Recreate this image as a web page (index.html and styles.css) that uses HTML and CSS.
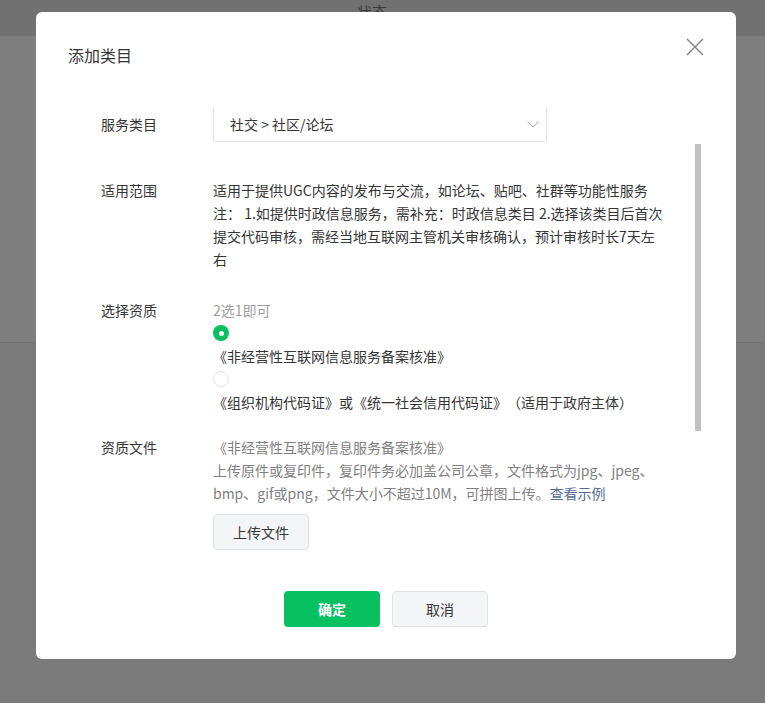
FILE: index.html
```html
<!DOCTYPE html>
<html lang="zh-CN">
<head>
<meta charset="utf-8">
<title>添加类目</title>
<link rel="stylesheet" href="styles.css">
</head>
<body>
<div class="page">
  <div class="thead"><span class="th-gap"></span><span class="th">状态</span></div>
  <div class="tbody"></div>
  <div class="rest"></div>
</div>

<div class="dialog">
  <div class="dialog-hd">
    <h3 class="dialog-title">添加类目</h3>
    <button class="close" type="button" aria-label="关闭">
      <svg width="18" height="18" viewBox="0 0 18 18"><path d="M1 1L17 17M17 1L1 17" stroke="#808080" stroke-width="1.4" fill="none"/></svg>
    </button>
  </div>
  <div class="dialog-bd">
    <div class="form">
      <div class="row row-select">
        <div class="lbl lbl-tall">服务类目</div>
        <div class="ctrl">
          <div class="select">
            <span>社交 &gt; 社区/论坛</span>
            <svg class="chev" width="12" height="7" viewBox="0 0 12 7"><path d="M0.5 0.8L6 6L11.5 0.8" stroke="#a6a6a6" stroke-width="1" fill="none"/></svg>
          </div>
        </div>
      </div>

      <div class="row row-scope">
        <div class="lbl">适用范围</div>
        <div class="ctrl text-main">
          <p class="para">适用于提供UGC内容的发布与交流，如论坛、贴吧、社群等功能性服务</p>
          <p class="para">注： 1.如提供时政信息服务，需补充：时政信息类目 2.选择该类目后首次提交代码审核，需经当地互联网主管机关审核确认，预计审核时长7天左右</p>
        </div>
      </div>

      <div class="row row-qual">
        <div class="lbl">选择资质</div>
        <div class="ctrl">
          <div class="tip">2选1即可</div>
          <div class="radio-line"><span class="radio checked"></span></div>
          <div class="opt">《非经营性互联网信息服务备案核准》</div>
          <div class="radio-line"><span class="radio"></span></div>
          <div class="opt">《组织机构代码证》或《统一社会信用代码证》（适用于政府主体）</div>
        </div>
      </div>

      <div class="row row-file">
        <div class="lbl">资质文件</div>
        <div class="ctrl">
          <div class="desc">《非经营性互联网信息服务备案核准》</div>
          <div class="desc">上传原件或复印件，复印件务必加盖公司公章，文件格式为jpg、jpeg、bmp、gif或png，文件大小不超过10M，可拼图上传。<a class="link" href="#">查看示例</a></div>
          <button class="btn btn-default btn-upload" type="button">上传文件</button>
        </div>
      </div>
    </div>
    <div class="thumb"></div>
  </div>
  <div class="dialog-ft">
    <button class="btn btn-primary" type="button">确定</button>
    <button class="btn btn-default" type="button">取消</button>
  </div>
</div>
</body>
</html>
```

FILE: styles.css
```css
html, body {
  margin: 0;
  padding: 0;
}
body {
  width: 765px;
  height: 703px;
  overflow: hidden;
  background: #7a7a7a;
  font-family: "Noto Sans CJK SC", "Microsoft YaHei", sans-serif;
  font-size: 14px;
  color: #353535;
  text-spacing-trim: space-all;
  position: relative;
}

/* background page (under the mask) */
.page {
  display: flex;
  flex-direction: column;
}
.thead {
  height: 36px;
  background: #717171;
  display: grid;
  grid-template-columns: 322px 100px 1fr;
  color: #3a3a3a;
  font-size: 15px;
  line-height: 18px;
}
.th {
  text-align: center;
  padding-top: 3px;
}
.tbody {
  height: 306px;
  background: #7f7f7f;
  border-bottom: 1px solid #727272;
}
.rest {
  flex: 1;
}

/* dialog */
.dialog {
  position: absolute;
  left: 36px;
  top: 12px;
  width: 700px;
  height: 647px;
  background: #fff;
  border-radius: 6px;
  display: flex;
  flex-direction: column;
  box-sizing: border-box;
}
.dialog-hd {
  position: relative;
  padding: 32px 32px 0;
}
.dialog-title {
  margin: 0;
  font-size: 16px;
  font-weight: normal;
  line-height: 22px;
  color: #353535;
}
.close {
  position: absolute;
  top: 26px;
  right: 32px;
  width: 18px;
  height: 18px;
  padding: 0;
  border: 0;
  background: none;
  display: block;
}
.close svg {
  display: block;
}

.dialog-bd {
  position: relative;
  margin: 42px 32px 0;
  height: 463px;
  overflow: hidden;
}
.form {
  margin-top: -2px;
  padding-left: 33px;
}
.row {
  display: flex;
  align-items: flex-start;
}
.lbl {
  width: 112px;
  flex: none;
  line-height: 23px;
  color: #353535;
}
.lbl-tall {
  line-height: 36px;
}
.ctrl {
  width: 454px;
  line-height: 23px;
}
.row-scope { margin-top: 36.5px; }
.row-qual { margin-top: 28px; }
.row-file { margin-top: 22px; }

.select {
  width: 334px;
  height: 36px;
  box-sizing: border-box;
  border: 1px solid #e4e4e4;
  border-radius: 2px;
  padding: 0 7px 0 16px;
  display: flex;
  align-items: center;
  justify-content: space-between;
  color: #353535;
}
.chev {
  display: block;
}

.para {
  margin: 0;
}
.text-main {
  color: #353535;
}

.tip {
  color: #9e9e9e;
}
.radio-line {
  height: 23px;
  display: flex;
  align-items: center;
}
.radio {
  width: 16px;
  height: 16px;
  box-sizing: border-box;
  border-radius: 50%;
  border: 1px solid #e3e3e3;
  background: #fff;
  display: flex;
  align-items: center;
  justify-content: center;
}
.radio.checked {
  border: 0;
  background: #07c160;
}
.radio.checked::after {
  content: "";
  width: 5px;
  height: 5px;
  border-radius: 50%;
  background: #fff;
}
.opt {
  color: #353535;
}

.desc {
  color: #7f7f7f;
}
.link {
  color: #576b95;
  text-decoration: none;
}

.btn {
  width: 96px;
  height: 36px;
  box-sizing: border-box;
  border-radius: 4px;
  font-family: inherit;
  font-size: 14px;
  padding: 0;
  display: inline-flex;
  align-items: center;
  justify-content: center;
  cursor: pointer;
}
.btn-primary {
  background: #07c160;
  border: 0;
  color: #fff;
  font-weight: 600;
}
.btn-default {
  background: #f4f5f7;
  border: 1px solid #e1e2e4;
  color: #353535;
}
.btn-upload {
  margin-top: 9.5px;
}

.thumb {
  position: absolute;
  right: 3px;
  top: 36px;
  width: 6px;
  height: 287px;
  background: #c1c1c1;
}

.dialog-ft {
  display: flex;
  justify-content: center;
  gap: 12px;
  padding-top: 20px;
}
```
